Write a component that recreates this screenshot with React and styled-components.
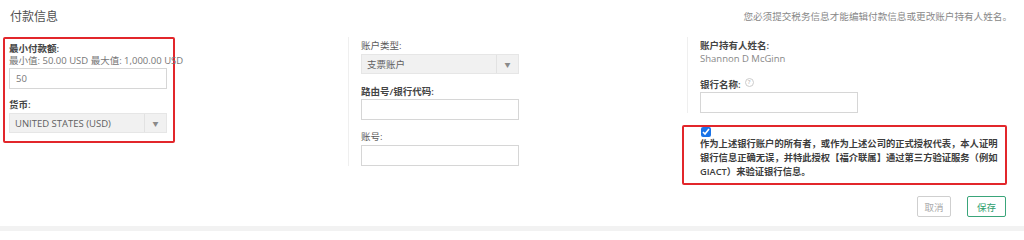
import React from 'react'
import styled, { createGlobalStyle } from 'styled-components'

const GlobalStyle = createGlobalStyle`
    html, body {
        margin: 0;
        padding: 0;
        background: #ffffff;
    }
    body {
        font-family: "Open Sans", "Noto Sans CJK SC", sans-serif;
    }
`

const Page = styled.div`
    width: 1024px;
    height: 231px;
    overflow: hidden;
    display: flex;
    flex-direction: column;
    background: #ffffff;
    color: #555;
`

const Header = styled.div`
    height: 37px;
    box-sizing: border-box;
    padding: 9px 12px 0 10px;
    display: flex;
    justify-content: space-between;
    align-items: flex-start;
`

const Title = styled.div`
    font-size: 12px;
    line-height: 16px;
    color: #505050;
`

const Note = styled.div`
    font-size: 9.6px;
    line-height: 16px;
    color: #888;
`

const Body = styled.div`
    display: grid;
    grid-template-columns: 340px 340px 1fr;
    height: 148px;
`

const Column = styled.div`
    display: flex;
    flex-direction: column;
    align-items: flex-start;
`

const Highlight = styled.div`
    box-sizing: border-box;
    border: 2px solid #e2262b;
    border-radius: 2px;
    margin-left: ${p => p.$left || 0}px;
    margin-top: ${p => p.$top || 0}px;
    width: ${p => p.$width}px;
    padding: ${p => p.$pad};
`

const Fields = styled.div`
    margin-left: ${p => p.$left}px;
    border-left: 1px solid #efefef;
    padding: 3px 0 0 12px;
`

const Label = styled.div`
    font-size: 9.5px;
    line-height: 12px;
    color: ${p => (p.$strong ? '#444' : '#5a5a5a')};
    font-weight: ${p => (p.$strong ? 600 : 400)};
    margin-top: ${p => p.$top || 0}px;
    white-space: nowrap;
    display: flex;
    align-items: center;
    gap: 4px;
`

const Hint = styled.div`
    font-size: 9.5px;
    line-height: 12px;
    color: #777;
    white-space: nowrap;
`

const Help = styled.span`
    width: 7px;
    height: 7px;
    border-radius: 50%;
    border: 1px solid #ccc;
    color: #bbb;
    font-size: 6px;
    line-height: 7px;
    text-align: center;
    margin-top: -5px;
`

const Input = styled.div`
    box-sizing: border-box;
    width: 158px;
    height: 21px;
    margin-top: ${p => p.$top || 1}px;
    border: 1px solid #d6d6d6;
    background: #fff;
    padding-left: 6px;
    font-size: 9.5px;
    line-height: 19px;
    color: #777;
`

const Select = styled.div`
    box-sizing: border-box;
    width: 158px;
    height: 20px;
    margin-top: 2px;
    border: 1px solid #e6e6e6;
    background: #f1f1f1;
    display: flex;
    align-items: center;
    font-size: 9.5px;
    color: #606060;
`

const SelectText = styled.div`
    flex: 1;
    padding-left: 5px;
    white-space: nowrap;
`

const SelectArrow = styled.div`
    width: 21px;
    height: 100%;
    border-left: 1px solid #e2e2e2;
    display: flex;
    align-items: center;
    justify-content: center;
    color: #8a8a8a;
    font-size: 6px;
`

const Name = styled.div`
    font-size: 9.5px;
    line-height: 12px;
    color: #888;
    margin-top: 1px;
`

const Check = styled.input`
    display: block;
    width: 10px;
    height: 10px;
    margin: 0 0 0 1px;
    accent-color: #1a73e8;
`

const Consent = styled.div`
    font-size: 9.3px;
    line-height: 14px;
    font-weight: 600;
    color: #3c3c3c;
`

const Footer = styled.div`
    display: flex;
    justify-content: flex-end;
    gap: 16px;
    padding: 11px 18px 0 0;
    height: 41px;
    box-sizing: border-box;
`

const Button = styled.button`
    box-sizing: border-box;
    height: 21px;
    width: ${p => p.$width}px;
    padding: 0;
    border-radius: 2px;
    background: #fff;
    font-family: inherit;
    font-size: 9.5px;
    border: 1px solid ${p => (p.$primary ? '#3aa57a' : '#cfcfcf')};
    color: ${p => (p.$primary ? '#2e9e6e' : '#aaa')};
`

const Band = styled.div`
    flex: 1;
    background: #f2f2f2;
`

export default function App() {
    return (
        <Page>
            <GlobalStyle />
            <Header>
                <Title>付款信息</Title>
                <Note>您必须提交税务信息才能编辑付款信息或更改账户持有人姓名。</Note>
            </Header>
            <Body>
                <Column>
                    <Highlight $left={3} $width={172} $pad="4px 0 8px 4px">
                        <Label $strong>最小付款额:</Label>
                        <Hint>最小值: 50.00 USD 最大值: 1,000.00 USD</Hint>
                        <Input>50</Input>
                        <Label $strong $top={10}>货币:</Label>
                        <Select>
                            <SelectText>UNITED STATES (USD)</SelectText>
                            <SelectArrow>▼</SelectArrow>
                        </Select>
                    </Highlight>
                </Column>
                <Column>
                    <Fields $left={8}>
                        <Label>账户类型:</Label>
                        <Select>
                            <SelectText>支票账户</SelectText>
                            <SelectArrow>▼</SelectArrow>
                        </Select>
                        <Label $strong $top={12}>路由号/银行代码:</Label>
                        <Input />
                        <Label $top={11}>账号:</Label>
                        <Input $top={2} />
                    </Fields>
                </Column>
                <Column>
                    <Fields $left={7}>
                        <Label $strong>账户持有人姓名:</Label>
                        <Name>Shannon D McGinn</Name>
                        <Label $strong $top={14}>银行名称: <Help>?</Help></Label>
                        <Input />
                    </Fields>
                    <Highlight $left={2} $top={12} $width={325} $pad="0 7px 4px 16px">
                        <Check type="checkbox" defaultChecked />
                        <Consent>
                            作为上述银行账户的所有者，或作为上述公司的正式授权代表，本人证明银行信息正确无误，并特此授权【福介联属】通过第三方验证服务（例如GIACT）来验证银行信息。
                        </Consent>
                    </Highlight>
                </Column>
            </Body>
            <Footer>
                <Button $width={34}>取消</Button>
                <Button $width={39} $primary>保存</Button>
            </Footer>
            <Band />
        </Page>
    )
}
